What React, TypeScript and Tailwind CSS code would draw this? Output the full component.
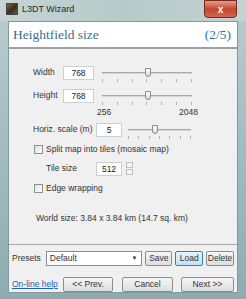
const ui = { fontFamily: '"Liberation Sans", "DejaVu Sans", sans-serif' };

function Slider({ width, pos }: { width: number; pos: number }) {
  return (
    <div className="relative h-[16px]" style={{ width }}>
      <div className="absolute left-0 right-0 top-[4px] h-[2px] bg-[#d6d6d6] border-t border-[#a8a8a8]" />
      <div
        className="absolute top-0 w-[6px] h-[9px] rounded-b-[3px] border border-[#8a8a8a] bg-gradient-to-b from-white to-[#dcdcdc]"
        style={{ left: pos }}
      />
      <div className="absolute left-0 right-0 top-[11px] flex justify-between">
        {Array.from({ length: 7 }).map((_, i) => (
          <div key={i} className="w-px h-[3px] bg-[#b0b0b0]" />
        ))}
      </div>
    </div>
  );
}

function Box({ value, w }: { value: string; w: string }) {
  return (
    <div className={`${w} h-[14px] bg-white border border-[#c9d0d6] text-[8.5px] leading-[12px] text-center text-[#222]`}>
      {value}
    </div>
  );
}

function Check({ label }: { label: string }) {
  return (
    <div className="flex items-center gap-[3px] whitespace-nowrap">
      <div className="w-[9px] h-[9px] border border-[#8e8f8f] bg-gradient-to-br from-[#e0e0e0] to-white" />
      <span>{label}</span>
    </div>
  );
}

function Btn({ children, w, hot }: { children: string; w: string; hot?: boolean }) {
  return (
    <div
      className={`${w} h-[15px] rounded-[2px] border text-[8.5px] leading-[13px] text-center text-[#333] whitespace-nowrap ${
        hot
          ? "border-[#3c7fb1] bg-gradient-to-b from-[#e5f4fc] to-[#bfe3f7]"
          : "border-[#8d8d8d] bg-gradient-to-b from-[#f6f6f6] to-[#dedede]"
      }`}
    >
      {children}
    </div>
  );
}

export default function App() {
  return (
    <div
      className="w-[246px] h-[299px] flex flex-col bg-gradient-to-b from-[#b9cccd] via-[#a2bcbf] to-[#8eacb0] overflow-hidden"
      style={ui}
    >
      <div className="h-[21px] shrink-0 flex items-start pl-[6px] pr-[9px] bg-gradient-to-r from-[#c6d4d4] via-[#b7caca] to-[#c4d2d2]">
        <div className="mt-[3px] w-[12px] h-[12px] bg-gradient-to-br from-[#8a6a3a] via-[#3b2f22] to-[#6b5535] border border-[#444]" />
        <span className="ml-[4px] mt-[4px] text-[9px] leading-[11px] text-[#1d2a2d]">L3DT Wizard</span>
        <div className="ml-auto w-[33px] h-[18px] rounded-b-[4px] border border-[#6e2a22] bg-gradient-to-b from-[#e79a88] via-[#c8452f] to-[#d3654c] flex items-center justify-center text-white text-[10px] font-bold">
          x
        </div>
      </div>
      <div className="mx-[8px] flex-1 flex flex-col bg-[#f0f0f0] border border-[#7f9a9c] text-[8.5px] leading-[11px] text-[#333]">
        <div
          className="h-[27px] shrink-0 bg-white border-b-2 border-[#a0a0a0] flex items-center justify-between pl-[4px] pr-[6px] text-[13.5px] text-[#3a6f8f]"
          style={{ fontFamily: '"Liberation Serif", serif' }}
        >
          <span>Heightfield size</span>
          <span>(2/5)</span>
        </div>
        <div className="h-[196px] shrink-0 border-b border-[#a8a8a8] pl-[24px] pt-[16px]">
          <div className="flex items-center h-[15px]">
            <span className="w-[30px]">Width</span>
            <Box value="768" w="w-[31px]" />
            <div className="ml-[8px] mt-[6px]">
              <Slider width={90} pos={43} />
            </div>
          </div>
          <div className="flex items-center h-[15px] mt-[8px]">
            <span className="w-[30px]">Height</span>
            <Box value="768" w="w-[31px]" />
            <div className="ml-[8px] mt-[6px]">
              <Slider width={90} pos={43} />
            </div>
          </div>
          <div className="flex w-[165px] justify-between pl-[64px] mt-[4px] h-[14px]">
            <span>256</span>
            <span>2048</span>
          </div>
          <div className="flex items-center h-[15px] mt-[1px]">
            <span className="w-[63px] whitespace-nowrap">Horiz. scale (m)</span>
            <Box value="5" w="w-[26px]" />
            <div className="ml-[6px] mt-[6px]">
              <Slider width={63} pos={24} />
            </div>
          </div>
          <div className="mt-[7px] pl-[1px]">
            <Check label="Split map into tiles (mosaic map)" />
          </div>
          <div className="flex items-center mt-[6px] pl-[13px] h-[15px]">
            <span className="w-[50px]">Tile size</span>
            <Box value="512" w="w-[26px]" />
            <div className="ml-[4px] flex flex-col gap-px">
              <div className="w-[7px] h-[6px] border border-[#c0c0c0] bg-[#f4f4f4]" />
              <div className="w-[7px] h-[6px] border border-[#c0c0c0] bg-[#f4f4f4]" />
            </div>
          </div>
          <div className="mt-[7px] pl-[1px]">
            <Check label="Edge wrapping" />
          </div>
          <div className="mt-[19px] pl-[3px] whitespace-nowrap">World size: 3.84 x 3.84 km (14.7 sq. km)</div>
        </div>
        <div className="flex items-center px-[3px] mt-[6px] gap-[3px]">
          <span className="mr-[2px]">Presets</span>
          <div className="w-[97px] h-[15px] bg-white border border-[#8d8d8d] flex items-center pl-[3px] pr-[4px]">
            <span>Default</span>
            <span className="ml-auto text-[6px]">▼</span>
          </div>
          <Btn w="w-[27px]">Save</Btn>
          <Btn w="w-[28px]" hot>
            Load
          </Btn>
          <Btn w="w-[28px]">Delete</Btn>
        </div>
        <div className="flex items-center px-[3px] mt-[11px]">
          <span className="text-[#1f5fb0] underline w-[51px] whitespace-nowrap">On-line help</span>
          <Btn w="w-[50px]">{"<< Prev."}</Btn>
          <div className="w-[9px]" />
          <Btn w="w-[51px]">Cancel</Btn>
          <div className="w-[8px]" />
          <Btn w="w-[53px]">{"Next >>"}</Btn>
        </div>
      </div>
      <div className="h-[8px] shrink-0" />
    </div>
  );
}
